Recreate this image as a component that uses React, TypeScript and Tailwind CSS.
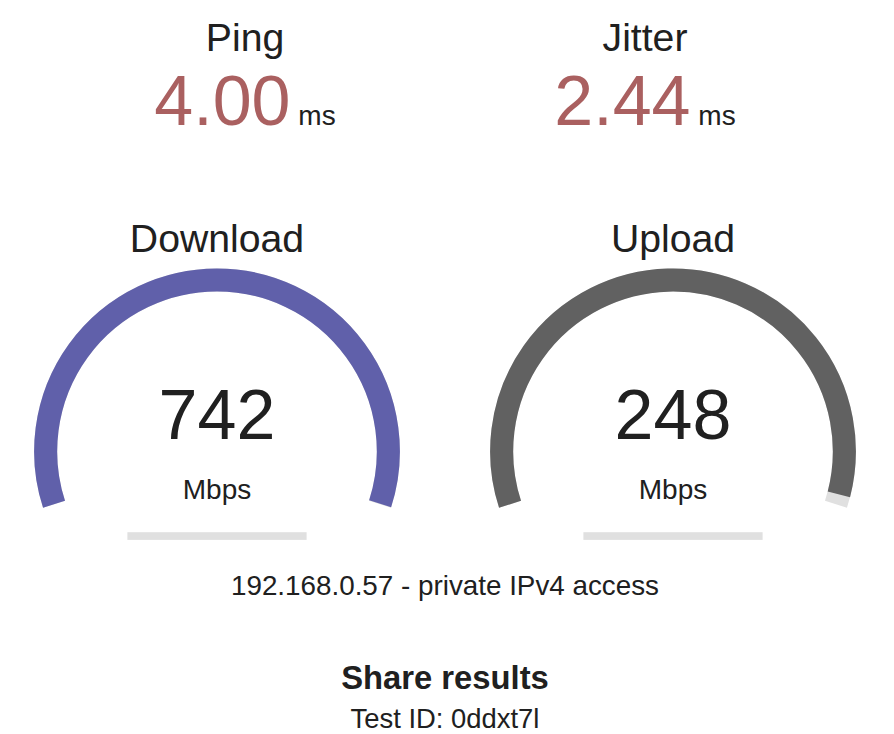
import React from "react";

const METER_BK = "#E0E0E0";
const DL_COLOR = "#6060AA";
const UL_COLOR = "#616161";

// same curve the speedtest uses to turn Mbps into gauge fill
function mbpsToAmount(s: number) {
  return 1 - 1 / Math.pow(1.3, Math.sqrt(s));
}

function arcPath(cx: number, cy: number, r: number, a0: number, a1: number) {
  const x0 = cx + r * Math.cos(a0);
  const y0 = cy + r * Math.sin(a0);
  const x1 = cx + r * Math.cos(a1);
  const y1 = cy + r * Math.sin(a1);
  const large = a1 - a0 > Math.PI ? 1 : 0;
  return `M ${x0} ${y0} A ${r} ${r} 0 ${large} 1 ${x1} ${y1}`;
}

function Meter({ amount, color }: { amount: number; color: string }) {
  const w = 448;
  const h = 350;
  const scale = h * 0.0055;
  const lw = 12 * scale;
  const cx = w / 2;
  const cy = h - 58 * scale;
  const r = h / 1.8 - lw;
  const start = -Math.PI * 1.1;
  const end = Math.PI * 0.1;
  const fill = start + amount * Math.PI * 1.2;

  return (
    <svg width={w} height={h} viewBox={`0 0 ${w} ${h}`} className="col-start-1 row-start-1">
      <path d={arcPath(cx, cy, r, start, end)} fill="none" stroke={METER_BK} strokeWidth={lw} />
      <path d={arcPath(cx, cy, r, start, fill)} fill="none" stroke={color} strokeWidth={lw} />
      <rect x={w * 0.3} y={h - 16 * scale} width={w * 0.4} height={4 * scale} fill={METER_BK} />
    </svg>
  );
}

function SmallTest({ name, value }: { name: string; value: string }) {
  return (
    <div className="flex w-[392px] shrink-0 flex-col items-center">
      <div className="text-[39.2px] leading-[44px]">{name}</div>
      <div className="mt-[6px] h-[70px] whitespace-nowrap text-[70px] leading-[70px]">
        <span className="text-[#AA6060]">{value}</span>
        <span className="text-[28px] leading-[28px]"> ms</span>
      </div>
    </div>
  );
}

function SpeedTest({ name, value, color }: { name: string; value: number; color: string }) {
  return (
    <div className="grid h-[350px] w-[448px] shrink-0">
      <Meter amount={mbpsToAmount(value)} color={color} />
      <div className="col-start-1 row-start-1 flex flex-col items-center pt-[4px]">
        <div className="text-[39.2px] leading-[44px]">{name}</div>
        <div className="mt-[119.4px] text-[70px] leading-[70px]">{value}</div>
        <div className="mt-[23.6px] text-[28px] leading-[32px]">Mbps</div>
      </div>
    </div>
  );
}

export default function App() {
  return (
    <div className="min-h-screen overflow-hidden bg-white pr-[4px] font-['Liberation_Sans',Arial,sans-serif] text-[#202020]">
      <div className="flex justify-center gap-[8px] pt-[16px]">
        <SmallTest name="Ping" value="4.00" />
        <SmallTest name="Jitter" value="2.44" />
      </div>

      <div className="mt-[77px] flex justify-center gap-[8px]">
        <SpeedTest name="Download" value={742} color={DL_COLOR} />
        <SpeedTest name="Upload" value={248} color={UL_COLOR} />
      </div>

      <div className="mt-[7px] text-center text-[27.8px] leading-[32px]">
        192.168.0.57 - private IPv4 access
      </div>

      <div className="mt-[56.5px] text-center">
        <h3 className="text-[32.76px] font-bold leading-[38px]">Share results</h3>
        <p className="mt-[6px] text-[27.4px] leading-[31px]">Test ID: 0ddxt7l</p>
      </div>
    </div>
  );
}
